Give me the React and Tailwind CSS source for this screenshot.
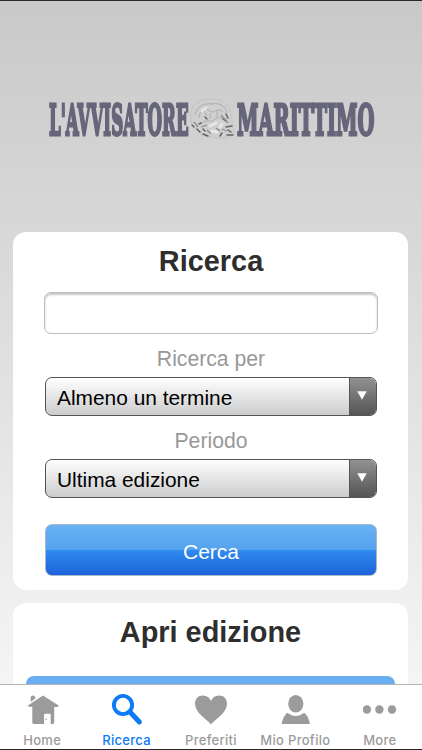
import { useState } from 'react';

const TABS = [
  { id: 'home', label: 'Home' },
  { id: 'ricerca', label: 'Ricerca' },
  { id: 'preferiti', label: 'Preferiti' },
  { id: 'profilo', label: 'Mio Profilo' },
  { id: 'more', label: 'More' },
];

function Logo() {
  return (
    <svg width="334" height="48" viewBox="0 0 334 48" className="overflow-visible blur-[0.6px]" role="img" aria-label="L'Avvisatore Marittimo">
      <g fill="#66657a" stroke="#66657a" strokeWidth="2.2" fontFamily="'DejaVu Serif', serif" fontWeight="bold" fontSize="42">
        <text transform="translate(5 40.7) scale(0.39 1)" textLength="358" lengthAdjust="spacingAndGlyphs" vectorEffect="non-scaling-stroke">L'AVVISATORE</text>
        <text transform="translate(193 40.7) scale(0.46 1)" textLength="299" lengthAdjust="spacingAndGlyphs" vectorEffect="non-scaling-stroke">MARITTIMO</text>
      </g>
      {/* Incisione centrale */}
      <path d="M147 18 C148 9 157 5 167 5 C177 5 184 10 186 17 C187 21 189 27 188 33 C192 36 190 42 184 43 C176 46 171 43 165 43 C158 43 155 38 151 35 C147 30 146 24 147 18Z" fill="#cfcfcf" stroke="#bfbfbf" strokeWidth="0.8" />
      <g fill="none" stroke="#adadad" strokeWidth="1">
        <path d="M151 21 C153 12 160 9 168 10 C176 8 182 13 183 19" />
        <path d="M155 24 C155 16 162 13 166 17 C170 21 173 12 179 18" />
        <path d="M157 30 C162 24 167 30 171 25 C176 21 181 27 183 24" />
        <path d="M166 19 V25 M173 16 V23 M160 17 L163 22" />
      </g>
      <g fill="none" stroke="#e6e6e6" strokeWidth="3" strokeLinecap="round">
        <path d="M166 32 L172 29 M168 37 L173 38 M176 33 L178 30 M158 17 L162 14" />
      </g>
      <g fill="none" stroke="#636366" strokeWidth="1.5" strokeLinecap="round">
        <path d="M148 31 L150 33 M153 35 L156 38 M155 30 L157 29 M159 35 L161 37 M159 40 L164 42" />
        <path d="M161 23 L163 25 M179 25 L182 27 M182 20 L184 24 M182 33 L188 32" />
        <path d="M176 42 L178 39 M183 41 L189 41 M184 36 L187 38" />
      </g>
      <g fill="none" stroke="#8c8c8e" strokeWidth="1.3">
        <path d="M150 28 L154 33 M157 33 L163 31 M163 36 L167 40 M172 34 L176 37 M177 21 L184 29 M178 35 L183 37" />
      </g>
    </svg>
  );
}

function Select({ value }) {
  return (
    <button type="button" className="flex h-[39px] w-[332px] shrink-0 overflow-hidden rounded-[7px] border-[1.5px] border-[#555] bg-linear-to-b from-white to-[#cccccc] text-left">
      <span className="flex-1 pt-px pl-[11px] text-[20.9px] leading-[38px] text-black">{value}</span>
      <span className="flex w-[27px] justify-center border-l border-[#555] bg-linear-to-b from-[#929292] to-[#555555] pt-[13px] pr-[2px]">
        <svg width="10" height="9" viewBox="0 0 10 9" fill="white"><path d="M0.3 0.3H9.7L5 8.7Z" /></svg>
      </span>
    </button>
  );
}

function TabIcon({ id }) {
  if (id === 'home') {
    return (
      <svg width="32" height="32" viewBox="0 0 32 32" fill="currentColor" className="relative left-px">
        <path d="M3.7 7.5V3.8Q3.7 1.6 6 1.6Q8.2 1.6 8.2 3.2V4.6L3.7 8Z" />
        <path d="M16 1.5L32 11.8Q31 13.5 27.2 12.8V28.6Q27.2 30 25.8 30H23.7V20.7Q23.7 19.7 22.7 19.7H18.1Q17.1 19.7 17.1 20.7V30H6.8Q5.3 30 5.3 28.6V12.8Q1.5 13.3 0.5 11.8Z" />
        <circle cx="19.2" cy="25.2" r="0.8" />
      </svg>
    );
  }
  if (id === 'ricerca') {
    return (
      <svg width="32" height="32" viewBox="0 0 32 32" fill="none" stroke="currentColor">
        <circle cx="12" cy="11" r="9.1" strokeWidth="3.9" />
        <path d="M19 18L28.4 28" strokeWidth="5" strokeLinecap="round" />
      </svg>
    );
  }
  if (id === 'preferiti') {
    return (
      <svg width="34" height="32" viewBox="0 0 34 32" fill="currentColor">
        <path d="M17 30.5C14 26.5 7.5 23 3.5 17C-1.5 9.5 1.5 1.5 9 1.5C13 1.5 15.7 3.7 17 7C18.3 3.7 21 1.5 25 1.5C32.5 1.5 35.5 9.5 30.5 17C26.5 23 20 26.5 17 30.5Z" />
      </svg>
    );
  }
  if (id === 'profilo') {
    return (
      <svg width="32" height="32" viewBox="0 0 32 32" fill="currentColor">
        <ellipse cx="16.8" cy="9.8" rx="7.6" ry="8.8" />
        <path d="M7.5 19.3Q8.5 18.6 9.5 19.4Q16.8 24.5 24 19.4Q25 18.6 26 19.3Q29.3 22.5 30.8 28.4Q31.1 30 29.6 30H4Q2.5 30 2.8 28.4Q4.3 22.5 7.5 19.3Z" />
      </svg>
    );
  }
  return (
    <svg width="34" height="32" viewBox="0 0 34 32" fill="currentColor">
      <circle cx="3.9" cy="15.5" r="4.2" />
      <circle cx="16.4" cy="15.5" r="4.2" />
      <circle cx="29" cy="15.5" r="4.2" />
    </svg>
  );
}

function TabBar({ active, onChange }) {
  return (
    <nav className="grid h-[65px] shrink-0 grid-cols-5 border-t border-[#b5b5b8] bg-white">
      {TABS.map((tab) => (
        <button
          key={tab.id}
          type="button"
          onClick={() => onChange(tab.id)}
          className={`flex flex-col items-center pt-[9px] font-[Inter,sans-serif] text-[13px] font-medium leading-[17px] tracking-[0.3px] whitespace-nowrap ${active === tab.id ? 'text-[#0d7bf5]' : 'text-[#9b9b9b]'}`}
        >
          <TabIcon id={tab.id} />
          <span className="mt-[5.5px]">{tab.label}</span>
        </button>
      ))}
    </nav>
  );
}

function App() {
  const [tab, setTab] = useState('ricerca');
  const [query, setQuery] = useState('');

  return (
    <div className="flex h-[750px] w-[422px] flex-col overflow-hidden border-y border-[#29272a] bg-white font-['Liberation_Sans',Arial,sans-serif]">
      <main className="flex min-h-0 flex-1 flex-col items-center overflow-hidden bg-linear-to-b from-[#c9c9c9] to-[#f5f5f5] pr-px">
        <header className="flex h-[230.5px] shrink-0 items-start pt-[93px]">
          <Logo />
        </header>

        {/* RICERCA */}
        <section className="flex h-[358px] w-[395px] shrink-0 flex-col items-center rounded-[13px] bg-white pt-[12px] pl-px">
          <h1 className="text-[28.9px] leading-[34px] font-bold text-[#2e2e2e]">Ricerca</h1>
          <input
            value={query}
            onChange={(e) => setQuery(e.target.value)}
            className="mt-[14.5px] h-[42px] w-[334px] shrink-0 rounded-[7px] border border-[#bdbdbd] bg-white px-3 text-xl shadow-[inset_0_2px_2px_#c8c8c8] outline-none"
          />
          <label className="mt-[13px] mb-[6px] text-[21.2px] leading-6 text-[#999]">Ricerca per</label>
          <Select value="Almeno un termine" />
          <label className="mt-[13px] mb-[6px] text-[21.2px] leading-6 text-[#999]">Periodo</label>
          <Select value="Ultima edizione" />
          <button type="button" className="mt-[26px] h-[52px] w-[332px] shrink-0 rounded-[7px] border border-[#a9b9cd] bg-[linear-gradient(#69b2f4_0%,#54a1ed_50%,#318bee_50%,#1c62da_100%)] pt-[3px] text-[21px] text-white">
            Cerca
          </button>
        </section>

        {/* EDIZIONI */}
        <section className="mt-[13px] flex h-[200px] w-[395px] shrink-0 flex-col items-center rounded-[13px] bg-white pt-[12.5px]">
          <h2 className="text-[28.9px] leading-[34px] font-bold text-[#2e2e2e]">Apri edizione</h2>
          <div className="mt-[27px] h-[52px] w-[369px] shrink-0 rounded-[8px] bg-[#69aff0]" />
        </section>
      </main>
      <TabBar active={tab} onChange={setTab} />
    </div>
  );
}

export default App;
